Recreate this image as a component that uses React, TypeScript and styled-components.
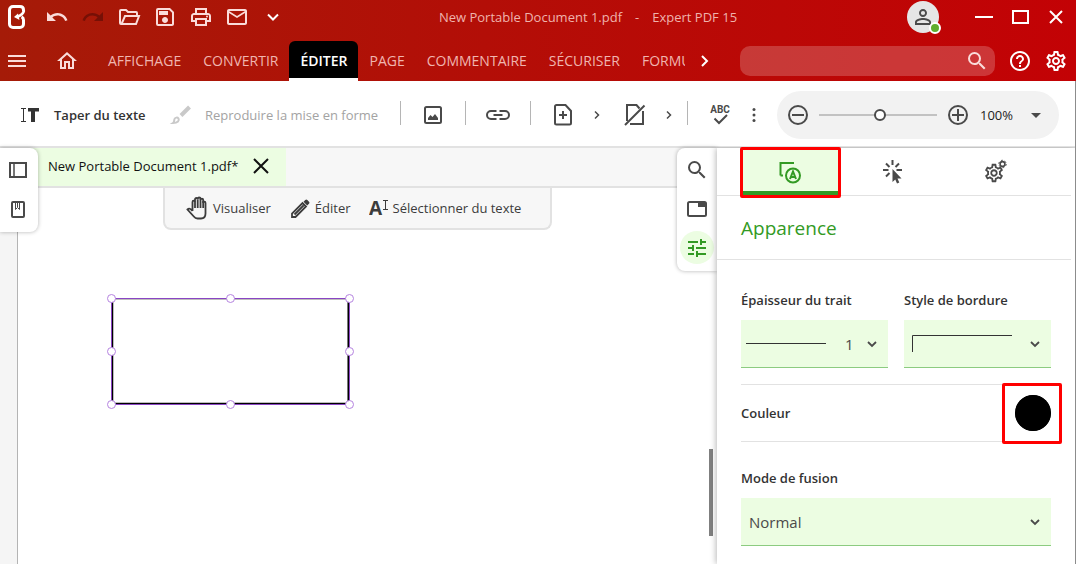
import React from "react";
import styled, { createGlobalStyle, css } from "styled-components";
import {
  MdArrowDropDown,
  MdHelpOutline,
  MdMailOutline,
  MdMenu,
  MdOutlineHome,
  MdOutlinePrint,
  MdOutlineSave,
  MdOutlineSettings,
  MdPersonOutline,
  MdRedo,
  MdSearch,
  MdTune,
  MdUndo,
} from "react-icons/md";

const ink = "#4a4a4a";
const green = "#339a24";
const mint = "#ecfde2";
const line = "#e2e2e2";

const GlobalStyle = createGlobalStyle`
  * { box-sizing: border-box; }
  body { margin: 0; background: #fff; color: #333; }
  body, button, input, select { font-family: "Open Sans", "Noto Sans", sans-serif; font-size: 13px; }
  button { border: 0; padding: 0; background: none; color: inherit; cursor: pointer; }
  svg { display: block; flex: none; }
  h1, h2 { margin: 0; font-weight: 400; }
`;

const Shell = styled.div`
  min-height: 100vh;
  display: flex;
  flex-direction: column;
  overflow: hidden;
`;

/* ---------- header ---------- */

const Header = styled.header`
  background: linear-gradient(90deg, #a51b08 0%, #b30e07 45%, #c30205 100%);
  color: #fadcda;
`;

const TitleRow = styled.div`
  display: flex;
  align-items: center;
  height: 34px;
  padding: 0 8px 0 6px;
`;

const Quick = styled.div`
  display: flex;
  align-items: center;
  gap: 12px;
  margin-left: 17px;
`;

const IconButton = styled.button<{ $w?: number; $color?: string }>`
  display: flex;
  align-items: center;
  justify-content: center;
  flex: none;
  width: ${(p) => p.$w ?? 24}px;
  height: 24px;
  color: ${(p) => p.$color ?? "inherit"};
`;

const DocTitle = styled.h1`
  flex: 1;
  display: flex;
  justify-content: center;
  gap: 13px;
  padding-right: 16px;
  font-size: 13px;
  line-height: 20px;
  color: #efb3ad;
  white-space: nowrap;
`;

const Avatar = styled.button`
  position: relative;
  display: flex;
  align-items: center;
  justify-content: center;
  width: 32px;
  height: 32px;
  margin-right: 33px;
  border-radius: 50%;
  background: #e6e6e6;
  color: ${ink};
`;

const Online = styled.span`
  position: absolute;
  right: -2px;
  bottom: -1px;
  width: 12px;
  height: 12px;
  border: 2px solid #fff;
  border-radius: 50%;
  background: #5fae2e;
`;

const WindowButtons = styled.div`
  display: flex;
  gap: 12px;
  color: #fff;
`;

const MenuRow = styled.div`
  display: flex;
  align-items: center;
  height: 47px;
  padding: 6px 8px 0 5px;
`;

const MenuTabs = styled.nav`
  flex: 1;
  min-width: 0;
  display: flex;
  align-items: center;
  height: 40px;
  margin-left: 17px;
  overflow: hidden;
`;

const HomeButton = styled(IconButton)`
  margin-right: 9px;
`;

const MenuTab = styled.button<{ $active?: boolean }>`
  flex: none;
  height: 40px;
  padding: 3px 11px 0;
  border-bottom: 3px solid transparent;
  font-size: 14px;
  line-height: 20px;
  color: #f0b5af;
  ${(p) =>
    p.$active &&
    css`
      border-bottom-color: #fff;
      border-radius: 6px 6px 0 0;
      background: #000;
      color: #fff;
      font-weight: 600;
    `}
`;

const SearchBox = styled.label`
  display: flex;
  align-items: center;
  flex: 0 1 255px;
  height: 30px;
  margin: 0 13px 0 15px;
  padding-right: 6px;
  border-radius: 10px;
  background: rgba(255, 255, 255, 0.2);
  input {
    flex: 1;
    min-width: 0;
    height: 30px;
    padding: 0 12px;
    border: 0;
    outline: 0;
    background: none;
    color: #fff;
  }
`;

const RightActions = styled.div`
  display: flex;
  gap: 12px;
  color: #fff;
`;

/* ---------- toolbar ---------- */

const Main = styled.div`
  flex: 1;
  display: flex;
  flex-direction: column;
  border-right: 1px solid #8c8c8c;
`;

const Toolbar = styled.div`
  display: flex;
  align-items: center;
  height: 67px;
  padding: 2px 16px 0 18px;
  border-bottom: 2px solid ${line};
  color: ${ink};
`;

const TextTool = styled.button<{ $w: number }>`
  display: flex;
  align-items: center;
  gap: 12px;
  flex: none;
  width: ${(p) => p.$w}px;
  font-size: 13px;
  font-weight: 600;
  line-height: 20px;
  color: #333;
  white-space: nowrap;
  &:disabled {
    color: #a3a3a3;
    font-weight: 500;
  }
`;

const Divider = styled.span`
  flex: none;
  width: 1px;
  height: 24px;
  margin-bottom: 4px;
  background: #b5b5b5;
`;

const ToolGroup = styled.div`
  display: flex;
  align-items: center;
  gap: 16px;
  padding: 0 12px 0 20px;
`;

const ToolPair = styled.div`
  display: flex;
  align-items: center;
  gap: 16px;
  margin-right: 4px;
`;

const ZoomPill = styled.div`
  display: flex;
  align-items: center;
  flex: none;
  height: 48px;
  margin-left: auto;
  padding: 0 11px 0 9px;
  border-radius: 24px;
  background: #f2f2f2;
  output {
    width: 44px;
    margin-left: 10px;
    font-size: 13px;
    color: #222;
  }
`;

const Slider = styled.input`
  appearance: none;
  width: 118px;
  height: 14px;
  margin: 0 9px;
  background: linear-gradient(#c2c2c2, #c2c2c2) center / 100% 2px no-repeat;
  &::-webkit-slider-thumb {
    appearance: none;
    width: 12px;
    height: 12px;
    border: 2px solid ${ink};
    border-radius: 50%;
    background: #fff;
  }
`;

/* ---------- workspace ---------- */

const Body = styled.div`
  flex: 1;
  display: grid;
  grid-template-columns: minmax(0, 1fr) 358px;
`;

const Workspace = styled.main`
  position: relative;
  display: flex;
  flex-direction: column;
`;

const DocTabs = styled.div`
  display: flex;
  height: 40px;
  border-bottom: 2px solid ${line};
  background: #f7f7f7;
`;

const DocTab = styled.div`
  display: flex;
  align-items: center;
  justify-content: space-between;
  width: 286px;
  padding: 0 13px 2px 48px;
  background: ${mint};
  color: #111;
  font-size: 13px;
`;

const Rail = styled.div<{ $side: "left" | "right" }>`
  position: absolute;
  top: 0;
  ${(p) => p.$side}: 0;
  display: flex;
  flex-direction: column;
  align-items: center;
  gap: 6px;
  width: ${(p) => (p.$side === "left" ? 38 : 40)}px;
  padding: ${(p) => (p.$side === "left" ? "5px 2px 7px 0" : "5px 0 7px")};
  border-radius: ${(p) => (p.$side === "left" ? "0 8px 8px 0" : "8px 0 0 8px")};
  background: #fff;
  box-shadow: 0 0 4px rgba(0, 0, 0, 0.3);
  color: ${ink};
`;

const RailButton = styled.button<{ $active?: boolean }>`
  display: flex;
  align-items: center;
  justify-content: center;
  width: 34px;
  height: 33px;
  border-radius: 50%;
  background: ${(p) => (p.$active ? mint : "none")};
  color: ${(p) => (p.$active ? green : "inherit")};
`;

const Canvas = styled.div`
  flex: 1;
  position: relative;
  margin-left: 17px;
  border-left: 1px solid #b4b4b4;
  background: #fff;
  box-shadow: -17px 0 0 #f5f5f5;
`;

const ModeBar = styled.div`
  display: flex;
  align-items: center;
  width: 389px;
  height: 42px;
  margin-left: 145px;
  padding-left: 20px;
  border: 2px solid ${line};
  border-top: 0;
  border-radius: 0 0 8px 8px;
  background: #f7f7f7;
`;

const ModeButton = styled.button`
  display: flex;
  align-items: center;
  gap: 4px;
  margin-right: 18px;
  font-size: 13px;
  line-height: 20px;
  color: #3c3c3c;
  white-space: nowrap;
`;

const Shape = styled.svg`
  position: absolute;
  left: 88px;
  top: 105px;
`;

const ScrollThumb = styled.span`
  position: absolute;
  right: 4px;
  top: 301px;
  width: 4px;
  height: 87px;
  background: #808080;
`;

/* ---------- property panel ---------- */

const Panel = styled.aside`
  position: relative;
  background: #fff;
  box-shadow: -1px 0 6px rgba(0, 0, 0, 0.28);
  clip-path: inset(-1px 0 0 -12px);
`;

const PanelTabs = styled.div`
  display: flex;
  gap: 5px;
  height: 48px;
  margin-right: 4px;
  padding-left: 24px;
  border-bottom: 1px solid ${line};
`;

const PanelTab = styled.button<{ $active?: boolean }>`
  position: relative;
  display: flex;
  align-items: center;
  justify-content: center;
  width: 98px;
  height: 47px;
  color: ${ink};
  ${(p) =>
    p.$active &&
    css`
      background: ${mint};
      color: ${green};
      box-shadow: inset 0 -4px 0 ${green};
    `}
`;

const Highlight = styled.span<{ $inset: string }>`
  position: absolute;
  inset: ${(p) => p.$inset};
  border: 3px solid #ff0000;
  border-radius: 2px;
  pointer-events: none;
`;

const PanelTitle = styled.h2`
  height: 64px;
  margin-right: 4px;
  padding-left: 24px;
  border-bottom: 1px solid ${line};
  font-size: 19px;
  line-height: 64px;
  color: ${green};
`;

const Form = styled.form`
  padding: 30px 24px 16px;
`;

const FieldRow = styled.div`
  display: grid;
  grid-template-columns: 1fr 1fr;
  gap: 16px;
`;

const Field = styled.label`
  display: block;
  font-size: 13px;
  font-weight: 600;
  line-height: 20px;
  color: #333;
`;

const SelectBox = styled.span`
  position: relative;
  display: flex;
  align-items: center;
  height: 48px;
  margin-top: 10px;
  border-bottom: 1px solid #8ccb80;
  background: ${mint};
  color: ${ink};
  > svg {
    position: absolute;
    pointer-events: none;
  }
`;

const Select = styled.select<{ $pad?: number }>`
  appearance: none;
  width: 100%;
  height: 47px;
  padding: 0 32px 0 ${(p) => p.$pad ?? 8}px;
  border: 0;
  outline: 0;
  background: none;
  font-size: 15px;
  color: ${ink};
`;

const CaretMark = styled.svg`
  right: 11px;
`;

const ColorRow = styled.label`
  display: flex;
  align-items: center;
  justify-content: space-between;
  height: 58px;
  margin: 16px 0 26px;
  border: solid ${line};
  border-width: 1px 0;
  font-weight: 600;
`;

const SwatchBox = styled.span`
  position: relative;
  display: flex;
`;

const Swatch = styled.input`
  appearance: none;
  width: 36px;
  height: 36px;
  padding: 0;
  border: 0;
  border-radius: 50%;
  background: #000;
  &::-webkit-color-swatch-wrapper { padding: 0; }
  &::-webkit-color-swatch { border: 0; border-radius: 50%; }
`;

/* ---------- drawings ---------- */

type IconProps = { w?: number; h?: number; sw?: number; children: React.ReactNode };
const Icon = ({ w = 24, h = 24, sw = 2, children }: IconProps) => (
  <svg width={w} height={h} viewBox={`0 0 ${w} ${h}`} fill="none" stroke="currentColor" strokeWidth={sw} aria-hidden="true">
    {children}
  </svg>
);

const Caret = () => (
  <CaretMark width="10" height="8" viewBox="0 0 10 8" fill="none" stroke="currentColor" strokeWidth="1.800">
    <path d="M1 2l4 4 4-4" />
  </CaretMark>
);

const Logo = () => (
  <Icon w={22} h={28} sw={3}>
    <g stroke="#fff">
      <path d="M17.500 8.500V7c0-2-1-3.500-3.500-3.500H7C5 3.500 3.500 5 3.500 7v14c0 2 1.500 3.500 3.500 3.500h7c2 0 3.500-1.500 3.500-3.500v-4c0-1.800-.8-2.600-2-3.200" />
      <path d="M18 7.500c-.5 3.500-3 5-7 6.500" strokeWidth="2.500" />
      <path d="M8 14l4-3.500 1.500 6.500z" fill="#fff" stroke="none" />
    </g>
  </Icon>
);

const OpenFolder = () => (
  <Icon>
    <path d="M5 19H4a1 1 0 0 1-1-1V6a1 1 0 0 1 1-1h5l2 2h8a1 1 0 0 1 1 1v2.500M4.500 19h14.500L22 11H8z" />
  </Icon>
);

const TypeText = () => (
  <Icon sw={1}>
    <path d="M3 5.500h5M5.500 6v12.500M3 18.500h5" />
    <path d="M10 5h11v3.500h-4V19h-4V8.500h-3z" fill="currentColor" stroke="none" />
  </Icon>
);

const Brush = () => (
  <Icon>
    <path d="M20.500 4L12 12.500" stroke="#c9c9c9" strokeWidth="4" />
    <path d="M4 20c1.500-1 1-2.500 1.500-4 .5-1.500 3-2 4-.5 1 2-.5 4.500-5.500 4.500z" stroke="#c9c9c9" />
  </Icon>
);

const Picture = () => (
  <Icon>
    <rect x="4" y="4" width="16" height="16" rx="1.500" />
    <path d="M7 17v-2l2.500-3 2 2 2.500-3 3 4v2z" fill="currentColor" stroke="none" />
  </Icon>
);

const Chain = () => (
  <Icon w={26}>
    <path d="M11.500 8H6a4 4 0 0 0 0 8h5.500M14.500 8H20a4 4 0 0 1 0 8h-5.500M8.500 12h9" />
  </Icon>
);

const AddDoc = () => (
  <Icon>
    <path d="M5.500 2h9l5.500 6v12a1.500 1.500 0 0 1-1.500 1.500h-13A1.500 1.500 0 0 1 4 20V3.500A1.500 1.500 0 0 1 5.500 2zM12 8v8M8 12h8" />
  </Icon>
);

const NoDoc = () => (
  <Icon>
    <path d="M4 18V2h9.500l3 3.500M20 8v13H7M2 22L21.500 2.500" />
  </Icon>
);

const Chevron = ({ d = "M4 8.500l3.500 3.500L4 15.500", w = 12, sw = 1.5 }) => (
  <Icon w={w} sw={sw}>
    <path d={d} />
  </Icon>
);

const Spelling = () => (
  <Icon w={24} h={26}>
    <text x="12" y="11" textAnchor="middle" fontFamily="Roboto" fontWeight="700" fontSize="10" fill="currentColor" stroke="none">
      ABC
    </text>
    <path d="M6.500 16.500l4.500 4.500 8-8" />
  </Icon>
);

const Dots = () => (
  <Icon w={12}>
    <g fill="currentColor" stroke="none">
      <circle cx="6" cy="6.500" r="1.500" />
      <circle cx="6" cy="12" r="1.500" />
      <circle cx="6" cy="17.500" r="1.500" />
    </g>
  </Icon>
);

const ZoomSign = ({ plus = false }) => (
  <Icon>
    <circle cx="12" cy="12" r="9" />
    <path d={plus ? "M6 12h12M12 6v12" : "M6 12h12"} />
  </Icon>
);

const Cross = ({ size = 18, arm = 15 }) => (
  <Icon w={size} h={size}>
    <path d={`M${size - arm} ${size - arm}L${arm} ${arm}M${arm} ${size - arm}L${size - arm} ${arm}`} />
  </Icon>
);

const Columns = () => (
  <Icon w={20} h={20}>
    <path d="M2 3h16v14H2z" />
    <path d="M6 3v14" strokeWidth="1.500" />
  </Icon>
);

const Bookmark = () => (
  <Icon w={20} h={20}>
    <rect x="4" y="3" width="12" height="15" rx="1" />
    <path d="M7.500 4v6.500l2-2 2 2V4M9.500 4v4" strokeWidth="1" />
  </Icon>
);

const WindowTab = () => (
  <Icon w={22} h={18}>
    <rect x="2" y="2" width="18" height="14" rx="1.500" />
    <path d="M12 2h8v5h-8z" fill="currentColor" stroke="none" />
  </Icon>
);

const Hand = () => (
  <Icon sw={1.8}>
    <path d="M7.500 15V6c0-1.800 2.500-1.800 2.500 0V3.500c0-2 2.700-2 2.700 0V3c0-2 2.800-2 2.800 0v1c0-1.800 2.700-1.800 2.700 0v3c0-1.800 2.300-1.800 2.300 0v10.500c0 3-1.700 5-4.500 5h-3.500c-1.700 0-2.700-.7-3.700-2L2.500 13.500c1.500-1.500 3-1 5 1.500" />
    <path d="M10 5.500V12M12.700 3.500V12M15.500 3.500V12M18.200 5v7" />
  </Icon>
);

const Pencil = () => (
  <Icon w={22} h={22} sw={1.8}>
    <path d="M3 20v-3.500L13.500 6l3.500 3.500L6.500 20zM5.500 17.500L14.500 8.500" />
    <path d="M14.500 4.800l1.800-1.800q1-1 2 0l1.700 1.700q1 1 0 2L18.200 8.500z" fill="currentColor" stroke="none" />
  </Icon>
);

const SelectText = () => (
  <Icon w={20} h={32} sw={1}>
    <text x="0" y="23" fontFamily="Open Sans" fontWeight="700" fontSize="19" fill="currentColor" stroke="none">
      A
    </text>
    <path d="M14 8.500h5M16.500 8.500v9M14 17.500h5" />
  </Icon>
);

const Appearance = () => (
  <Icon>
    <path d="M2.500 15.500V3H16M2.500 15.500H5" />
    <circle cx="15" cy="15.500" r="7" />
    <path d="M12 19l3-7.500 3 7.500M13 17h4" />
  </Icon>
);

const ClickIcon = () => (
  <Icon>
    <path d="M11.500 0v5M5 3.500l3.500 3.500M18 3.500L14.500 7M2 10h5.500M15.500 10H21M5 16.500L8.500 13" />
    <path d="M11.500 9v13l2.800-2.500 1.700 4 2.300-1-1.800-4h4z" fill="currentColor" stroke="none" />
  </Icon>
);

const Gears = () => (
  <svg width="24" height="26" viewBox="0 0 24 26" fill="none" aria-hidden="true">
    <g transform="translate(-1 3)" fill="currentColor">
      <MdOutlineSettings size={22} />
    </g>
    <circle cx="18.500" cy="5" r="2.400" stroke="currentColor" strokeWidth="1.600" />
    <circle cx="18.500" cy="5" r="3.700" stroke="currentColor" strokeWidth="1" strokeDasharray="1.900 1.970" />
  </svg>
);

const handles = [
  [5.5, 5.5], [124.5, 5.5], [243.5, 5.5],
  [5.5, 58.5], [243.5, 58.5],
  [5.5, 111.5], [124.5, 111.5], [243.5, 111.5],
];

const SelectedRectangle = () => (
  <Shape width="249" height="117" viewBox="0 0 249 117" fill="none">
    <rect x="7.500" y="6.500" width="234" height="103" stroke="#bdbdbd" />
    <path d="M6.500 6v104.500h236V6" stroke="#000" />
    <path d="M241.500 6v104" stroke="#777" />
    <rect x="5.500" y="5.500" width="238" height="106" stroke="#8a45c4" />
    {handles.map(([cx, cy]) => (
      <circle key={`${cx}-${cy}`} cx={cx} cy={cy} r="4" fill="#fff" stroke="#b583e0" />
    ))}
  </Shape>
);

/* ---------- page ---------- */

const menu = ["AFFICHAGE", "CONVERTIR", "ÉDITER", "PAGE", "COMMENTAIRE", "SÉCURISER", "FORMULAIRES"];

export default function App() {
  return (
    <Shell>
      <GlobalStyle />
      <Header>
        <TitleRow>
          <Logo />
          <Quick>
            <IconButton aria-label="Annuler"><MdUndo size={24} /></IconButton>
            <IconButton aria-label="Rétablir" $color="#761006"><MdRedo size={24} /></IconButton>
            <IconButton aria-label="Ouvrir"><OpenFolder /></IconButton>
            <IconButton aria-label="Enregistrer"><MdOutlineSave size={24} /></IconButton>
            <IconButton aria-label="Imprimer"><MdOutlinePrint size={24} /></IconButton>
            <IconButton aria-label="Envoyer"><MdMailOutline size={24} /></IconButton>
            <IconButton aria-label="Plus" $color="#fff"><Chevron w={24} sw={2} d="M7 9.500l5 5 5-5" /></IconButton>
          </Quick>
          <DocTitle>
            <span>New Portable Document 1.pdf</span>
            <span>-</span>
            <span>Expert PDF 15</span>
          </DocTitle>
          <Avatar aria-label="Compte">
            <MdPersonOutline size={24} />
            <Online />
          </Avatar>
          <WindowButtons>
            <IconButton aria-label="Réduire"><Icon><path d="M3 12h18" /></Icon></IconButton>
            <IconButton aria-label="Agrandir"><Icon><path d="M5 6h15v12H5z" /></Icon></IconButton>
            <IconButton aria-label="Fermer"><Cross size={20} arm={16} /></IconButton>
          </WindowButtons>
        </TitleRow>
        <MenuRow>
          <IconButton aria-label="Menu"><MdMenu size={24} /></IconButton>
          <MenuTabs>
            <HomeButton aria-label="Accueil" $w={42}><MdOutlineHome size={24} /></HomeButton>
            {menu.map((name) => (
              <MenuTab key={name} $active={name === "ÉDITER"}>{name}</MenuTab>
            ))}
          </MenuTabs>
          <IconButton aria-label="Onglets suivants" $w={40} $color="#fff">
            <Chevron w={24} sw={2} d="M9 7l5 5-5 5" />
          </IconButton>
          <SearchBox>
            <input type="search" aria-label="Rechercher" />
            <MdSearch size={24} />
          </SearchBox>
          <RightActions>
            <IconButton aria-label="Aide"><MdHelpOutline size={24} /></IconButton>
            <IconButton aria-label="Paramètres"><MdOutlineSettings size={24} /></IconButton>
          </RightActions>
        </MenuRow>
      </Header>

      <Main>
        <Toolbar>
          <TextTool $w={151}><TypeText />Taper du texte</TextTool>
          <TextTool $w={231} disabled><Brush />Reproduire la mise en forme</TextTool>
          <Divider />
          <IconButton aria-label="Image" $w={64}><Picture /></IconButton>
          <Divider />
          <IconButton aria-label="Lien" $w={64}><Chain /></IconButton>
          <Divider />
          <ToolGroup>
            <ToolPair>
              <IconButton aria-label="Insérer une page"><AddDoc /></IconButton>
              <IconButton aria-label="Options d'insertion" $w={12}><Chevron /></IconButton>
            </ToolPair>
            <IconButton aria-label="Supprimer l'arrière-plan"><NoDoc /></IconButton>
            <IconButton aria-label="Options d'arrière-plan" $w={12}><Chevron /></IconButton>
          </ToolGroup>
          <Divider />
          <ToolGroup>
            <IconButton aria-label="Orthographe"><Spelling /></IconButton>
            <IconButton aria-label="Autres outils" $w={12}><Dots /></IconButton>
          </ToolGroup>
          <ZoomPill>
            <IconButton aria-label="Zoom arrière"><ZoomSign /></IconButton>
            <Slider type="range" aria-label="Zoom" min={0} max={100} defaultValue={52} />
            <IconButton aria-label="Zoom avant"><ZoomSign plus /></IconButton>
            <output>100%</output>
            <IconButton aria-label="Choisir le zoom"><MdArrowDropDown size={24} /></IconButton>
          </ZoomPill>
        </Toolbar>

        <Body>
          <Workspace>
            <DocTabs>
              <DocTab>
                New Portable Document 1.pdf*
                <IconButton aria-label="Fermer le document"><Cross size={20} arm={17} /></IconButton>
              </DocTab>
            </DocTabs>
            <Canvas>
              <ModeBar>
                <ModeButton><Hand />Visualiser</ModeButton>
                <ModeButton><Pencil />Éditer</ModeButton>
                <ModeButton><SelectText />Sélectionner du texte</ModeButton>
              </ModeBar>
              <SelectedRectangle />
            </Canvas>
            <Rail $side="left">
              <RailButton aria-label="Volet"><Columns /></RailButton>
              <RailButton aria-label="Signets"><Bookmark /></RailButton>
            </Rail>
            <Rail $side="right">
              <RailButton aria-label="Rechercher dans le document"><MdSearch size={24} /></RailButton>
              <RailButton aria-label="Fenêtre"><WindowTab /></RailButton>
              <RailButton aria-label="Propriétés" $active><MdTune size={24} /></RailButton>
            </Rail>
            <ScrollThumb />
          </Workspace>

          <Panel>
            <PanelTabs role="tablist">
              <PanelTab role="tab" aria-label="Apparence" $active>
                <Appearance />
                <Highlight $inset="-1px -2px -3px -1px" />
              </PanelTab>
              <PanelTab role="tab" aria-label="Actions"><ClickIcon /></PanelTab>
              <PanelTab role="tab" aria-label="Réglages"><Gears /></PanelTab>
            </PanelTabs>
            <PanelTitle>Apparence</PanelTitle>
            <Form>
              <FieldRow>
                <Field>
                  Épaisseur du trait
                  <SelectBox>
                    <svg width="85" height="1" viewBox="0 0 85 1"><path d="M5 .5h80" stroke="#333" /></svg>
                    <Select $pad={104}>
                      <option>1</option>
                    </Select>
                    <Caret />
                  </SelectBox>
                </Field>
                <Field>
                  Style de bordure
                  <SelectBox>
                    <svg width="108" height="17" viewBox="0 0 108 17" fill="none"><path d="M8.500 17V.5H108" stroke="#333" /></svg>
                    <Select>
                      <option value="solid" aria-label="Continu"></option>
                    </Select>
                    <Caret />
                  </SelectBox>
                </Field>
              </FieldRow>
              <ColorRow>
                Couleur
                <SwatchBox>
                  <Swatch type="color" defaultValue="#000000" />
                  <Highlight $inset="-12px -11px -13px -13px" />
                </SwatchBox>
              </ColorRow>
              <Field>
                Mode de fusion
                <SelectBox>
                  <Select>
                    <option>Normal</option>
                  </Select>
                  <Caret />
                </SelectBox>
              </Field>
            </Form>
          </Panel>
        </Body>
      </Main>
    </Shell>
  );
}
